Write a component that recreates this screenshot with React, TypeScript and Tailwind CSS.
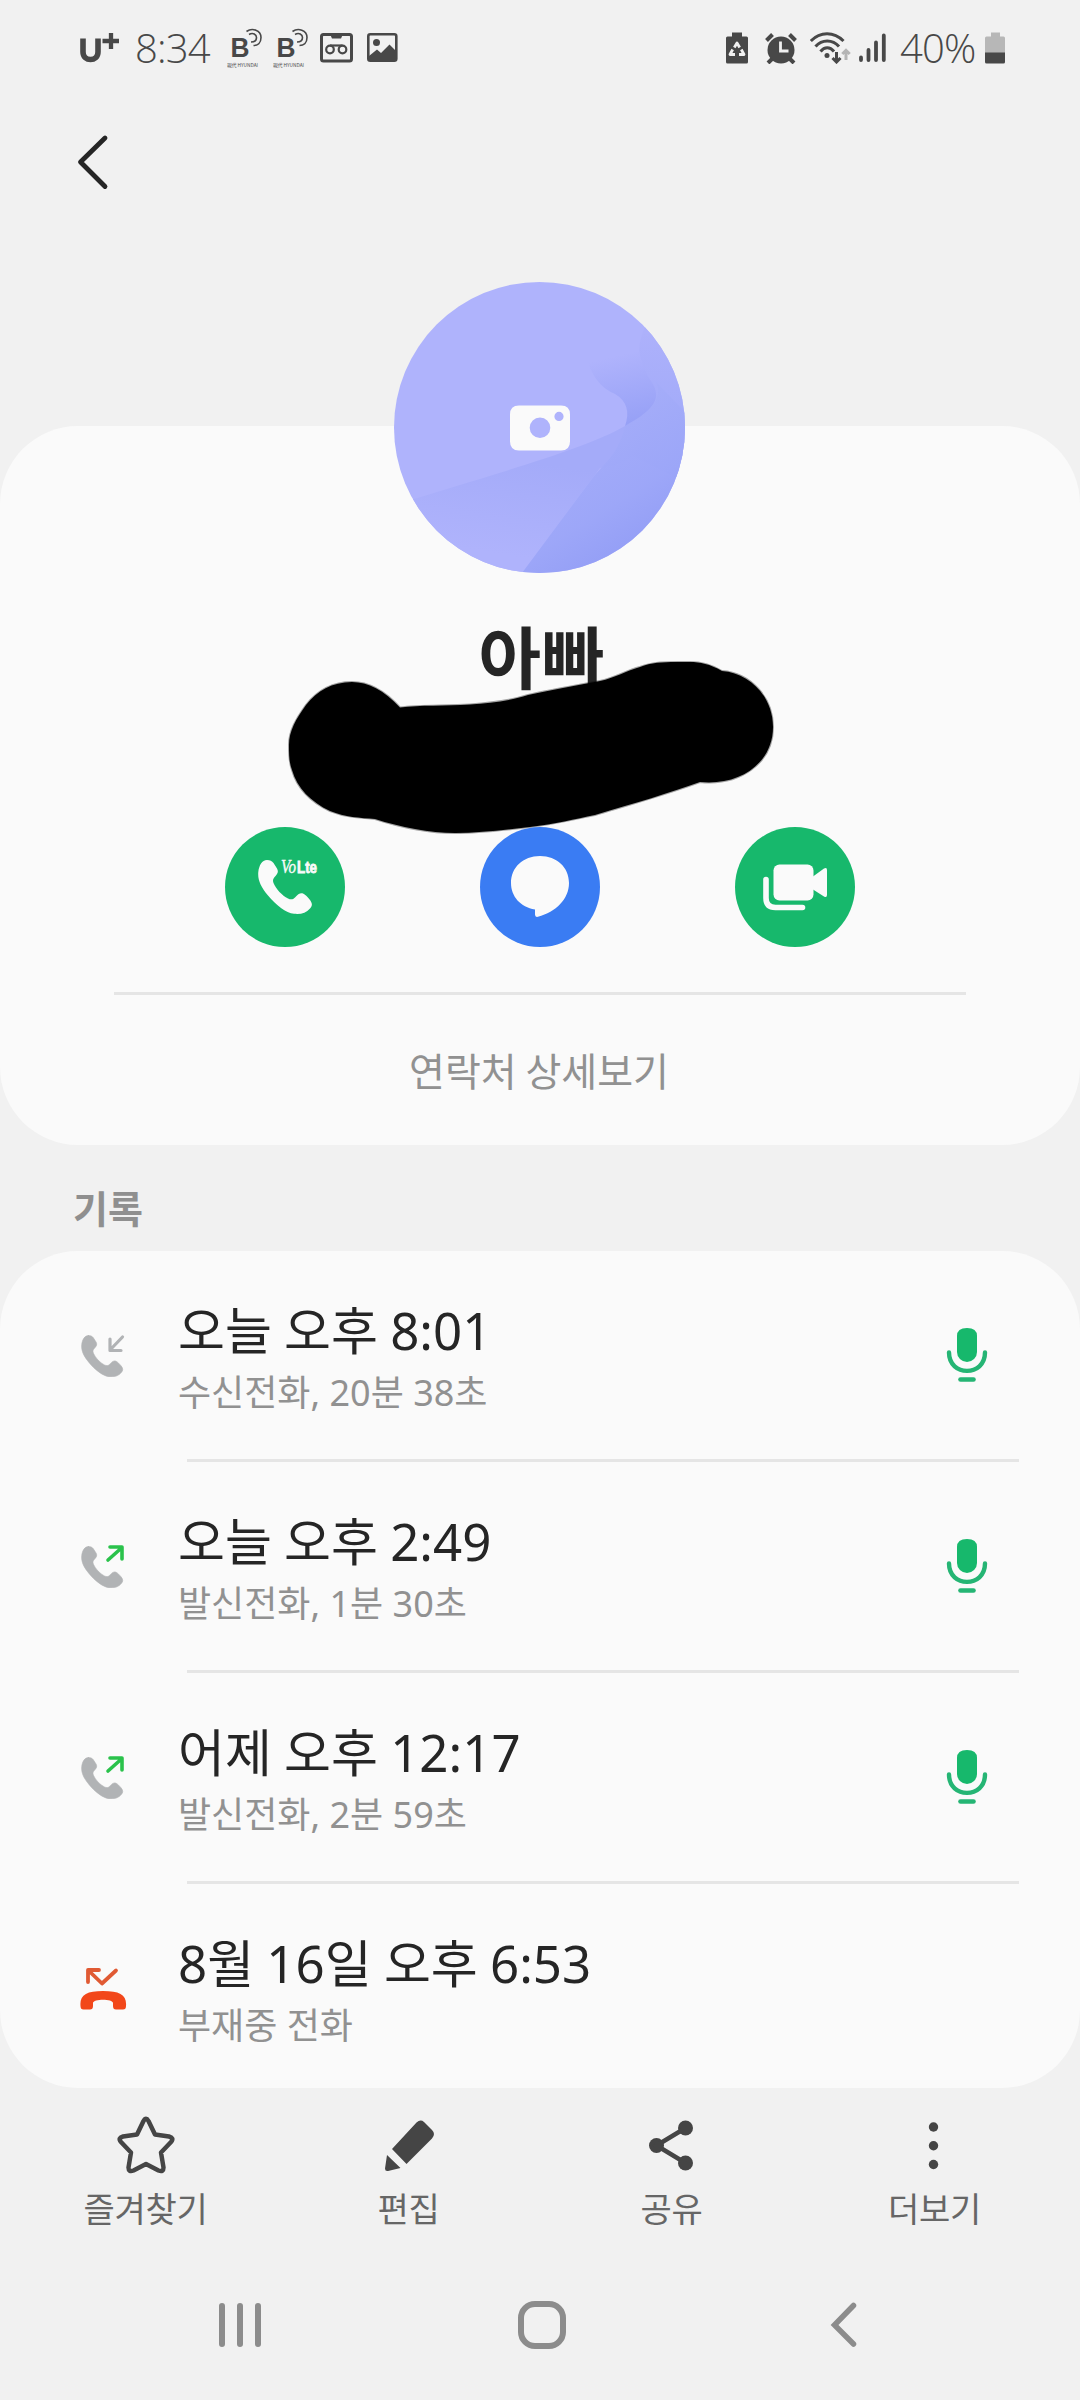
import type { ReactNode } from "react";

type CallKind = "incoming" | "outgoing" | "missed";

const calls: { kind: CallKind; when: string; detail: string; recorded: boolean }[] = [
  { kind: "incoming", when: "오늘 오후 8:01", detail: "수신전화, 20분 38초", recorded: true },
  { kind: "outgoing", when: "오늘 오후 2:49", detail: "발신전화, 1분 30초", recorded: true },
  { kind: "outgoing", when: "어제 오후 12:17", detail: "발신전화, 2분 59초", recorded: true },
  { kind: "missed", when: "8월 16일 오후 6:53", detail: "부재중 전화", recorded: false },
];

const HANDSET =
  "M9 0C12 0 14 1 15.500 3L19 8.500C20.500 11 20 13.500 17.500 16C15 18.500 14.500 20.500 15.500 23C18 29 24 35.500 30 38.500C33 40 35 39.500 37 37.500C40 34 42.500 32.500 45 33.500C47 34.300 50 37.500 52 40C54.500 43.500 54.500 45.500 52 48.500C48 53 43 54.500 36 53.800C28 53 18 45 10 35.500C3 27 -0.500 20 0.300 12C1 5.500 4 0 9 0Z";

function HyundaiIcon() {
  return (
    <svg width="36" height="40" viewBox="0 0 36 40" fill="none" stroke="#484848">
      <text x="3.500" y="29" fontSize="27" fontWeight="700" fontFamily="Liberation Sans, sans-serif" fill="#484848" stroke="none" textLength="19" lengthAdjust="spacingAndGlyphs">
        B
      </text>
      <path d="M19.500 3.500C25-0.500 34 2 34 9.500C34 15 30.500 17.500 26.500 17.500" strokeWidth="1.600" />
      <path d="M22 6.500C26 4 29.500 6.500 29.500 9.500C29.500 12.500 27.500 14 24 14" strokeWidth="1.600" />
      <text x="0" y="38.500" fontSize="5" fontFamily="Noto Sans CJK KR, sans-serif" fill="#484848" stroke="none" textLength="31" lengthAdjust="spacingAndGlyphs">
        現代 HYUNDAI
      </text>
    </svg>
  );
}

function StatusBar() {
  return (
    <header className="flex h-24 items-center justify-between pl-[80px] pr-[75px] text-[#484848]">
      <div className="flex items-center">
        <svg width="40" height="34" viewBox="0 0 40 34" fill="none" stroke="#484848">
          <path d="M3 7.500V21C3 31 18 31 18 21V7.500" strokeWidth="5.600" />
          <path d="M22.500 10H39M31 2V18" strokeWidth="4.300" />
        </svg>
        <span className="ml-[15px] w-[77px] whitespace-nowrap font-['Open_Sans','Noto_Sans',sans-serif] text-[40px] font-[360] leading-none tracking-[-0.8px]">8:34</span>
        <div className="ml-[15px] flex items-center gap-[10px]">
          <HyundaiIcon />
          <HyundaiIcon />
        </div>
        <svg className="ml-[11px]" width="33" height="30" viewBox="0 0 33 30" fill="none" stroke="#484848">
          <rect x="1.500" y="1.500" width="30" height="26.500" rx="2" strokeWidth="3" />
          <path d="M10 1h13l-2 4.500h-9z" fill="#484848" stroke="none" />
          <circle cx="10" cy="16.500" r="3.800" strokeWidth="2.200" />
          <circle cx="22.500" cy="16.500" r="3.800" strokeWidth="2.200" />
          <path d="M10 12.500h12.500" strokeWidth="2.200" />
        </svg>
        <svg className="ml-[14px]" width="31" height="30" viewBox="0 0 31 30">
          <rect x="1.300" y="1.300" width="28" height="26.500" rx="2" fill="none" stroke="#484848" strokeWidth="2.600" />
          <circle cx="9.500" cy="9.500" r="3.500" fill="#484848" />
          <path d="M2 23L10 16.500L14 20L22.500 11.500L29 18V28H2Z" fill="#484848" />
        </svg>
      </div>

      <div className="flex items-center">
        <svg width="22" height="32" viewBox="0 0 22 32">
          <path d="M6 0.500h10v4h4.500q1.500 0 1.500 1.500v24q0 1.500-1.500 1.500h-19q-1.500 0-1.500-1.500V6q0-1.500 1.500-1.500H6z" fill="#484848" />
          <path d="M8.300 15.500L11 11L13.700 15.500M15.300 17.500L18 22.500H13M9 22.500H4L6.700 17.500" fill="none" stroke="#f1f1f1" strokeWidth="2.800" strokeLinejoin="round" />
        </svg>
        <svg className="ml-[17px]" width="32" height="32" viewBox="0 0 32 32">
          <circle cx="16" cy="18" r="13.500" fill="#484848" />
          <path d="M1.500 8.500L7.500 2.500M30.500 8.500L24.500 2.500M7 27L3 31M25 27L29 31" stroke="#484848" strokeWidth="4" />
          <path d="M15.500 9.500V19H23.500" fill="none" stroke="#f1f1f1" strokeWidth="2.800" />
        </svg>
        <svg className="ml-[13px]" width="42" height="32" viewBox="0 0 42 32" fill="none" stroke="#484848" strokeWidth="3">
          <path d="M0.800 9C10-0.800 24-0.800 33.500 9" />
          <path d="M5.500 14.500C12 7 22.500 7 29 14.500" />
          <path d="M10.500 19.500C14.500 14.500 20 14.500 24 19.500" />
          <circle cx="17" cy="23.500" r="2.500" fill="#484848" stroke="none" />
          <path d="M26.500 20V29.500M22.500 26L26.500 30L30.500 26" />
          <path d="M36 28V19M32.300 22L36 18.300L39.700 22" stroke="#b4b4b4" />
        </svg>
        <svg className="ml-[7px]" width="27" height="30" viewBox="0 0 27 30" stroke="#484848" strokeWidth="3.800" strokeLinecap="round">
          <path d="M2 24.500V27M9.500 17V27M17 9.500V27M24.800 2.500V27" />
        </svg>
        <span className="ml-[14px] w-[84px] whitespace-nowrap font-['Open_Sans','Noto_Sans',sans-serif] text-[40px] font-[360] leading-none tracking-[-0.8px]">40%</span>
        <svg className="ml-[1px]" width="20" height="32" viewBox="0 0 20 32">
          <path d="M6 0.500h9v4h3.500q1.500 0 1.500 1.500V21H0V6q0-1.500 1.500-1.500H6z" fill="#b7b7b7" />
          <path d="M0 20.500H20V30q0 1.500-1.500 1.500h-17q-1.500 0-1.500-1.500z" fill="#484848" />
        </svg>
      </div>
    </header>
  );
}

function Avatar() {
  return (
    <svg className="ml-[394px] -mt-[144px] shrink-0" width="291" height="291" viewBox="0 0 291 291">
      <defs>
        <clipPath id="disc">
          <circle cx="145.500" cy="145.500" r="145.500" />
        </clipPath>
        <linearGradient id="slope" gradientUnits="userSpaceOnUse" x1="140" y1="180" x2="125" y2="275">
          <stop offset="0" stopColor="#a4abf9" />
          <stop offset="1" stopColor="#afb3fc" />
        </linearGradient>
        <linearGradient id="dune" gradientUnits="userSpaceOnUse" x1="175" y1="150" x2="250" y2="270">
          <stop offset="0" stopColor="#a5adf9" />
          <stop offset="0.600" stopColor="#9ca6f8" />
          <stop offset="1" stopColor="#919cf5" />
        </linearGradient>
        <linearGradient id="ridge" gradientUnits="userSpaceOnUse" x1="262" y1="50" x2="262" y2="150">
          <stop offset="0" stopColor="#adb1fb" />
          <stop offset="1" stopColor="#a1aaf9" />
        </linearGradient>
        <linearGradient id="shade" gradientUnits="userSpaceOnUse" x1="222" y1="74" x2="238" y2="143">
          <stop offset="0" stopColor="#afb3fc" />
          <stop offset="1" stopColor="#96a0f6" />
        </linearGradient>
      </defs>
      <g clipPath="url(#disc)">
        <rect width="291" height="291" fill="#afb3fc" />
        <path d="M251 45C240 68 247 86 255 97C268 114 262 126 231 144L231 170L291 200V40Z" fill="url(#ridge)" />
        <path d="M0 223C90 195 190 168 231 144C250 160 250 180 206 186L128 291H0Z" fill="url(#slope)" />
        <path d="M128 291L200 194C212 180 224 172 231 144C262 126 268 114 262 100L291 130V291Z" fill="url(#dune)" opacity="0.950" />
        <path d="M192 76C200 98 208 106 221 112C233 119 236 130 231 144C262 127 268 115 257 99C252 92 247 80 245 68Z" fill="url(#shade)" />
      </g>
      <path
        fillRule="evenodd"
        fill="#fafafa"
        d="M125 123.500H167Q176 123.500 176 132.500V159.500Q176 168.500 167 168.500H125Q116 168.500 116 159.500V132.500Q116 123.500 125 123.500ZM146 135.500A10.300 10.300 0 1 0 146 156.100A10.300 10.300 0 1 0 146 135.500ZM165 129.800A4.600 4.600 0 1 0 165 139A4.600 4.600 0 1 0 165 129.800Z"
      />
    </svg>
  );
}

function ActionButton({ color, children }: { color: string; children: ReactNode }) {
  return (
    <button className={`relative flex size-[120px] items-center justify-center rounded-full ${color}`}>
      {children}
    </button>
  );
}

function ContactCard() {
  return (
    <section className="relative flex h-[719px] flex-col rounded-[78px] bg-[#fafafa]">
      <Avatar />
      <h1 className="mt-[37px] h-[90px] pl-[4px] text-center text-[68px] font-bold leading-[90px] tracking-[1px] text-[#252525]">아빠</h1>

      {/* Marker stroke over the phone number */}
      <svg className="absolute left-[280px] top-[226px]" width="500" height="190" viewBox="280 652 500 190">
        <path
          d="M400 707.500C384 690 368 682 352 682C332 682 317 691 306 705C296 719 289 731 289 745C289 755 289 762 292 770C297 788 311 802 330 811C345 817 360 818 375 819C400 827 430 833 455 833C480 833 505 830 530 827C555 824 575 819 595 815C635 803 670 793 700 782C740 786 773 763 773 727C773 697 750 673 722 671C710 664 700 662 690 662C670 662 655 661 640 667C625 671 615 678 600 681C575 686 550 690 528 695C510 701 490 703 470 704.500C445 706 420 705 400 707.500Z"
          fill="#000"
          stroke="#000"
          strokeOpacity="0.350"
          strokeWidth="2"
        />
      </svg>

      <div className="mt-[127px] flex justify-center gap-[135px]">
        <ActionButton color="bg-[#17b86c]">
          <svg width="54" height="54" viewBox="0 0 54 54" fill="#fafafa">
            <path d={HANDSET} />
          </svg>
          <svg className="absolute left-[56px] top-[31px]" width="40" height="20" viewBox="0 0 40 20" fill="#fafafa">
            <text x="0" y="15" fontSize="18" fontStyle="italic" fontFamily="Liberation Serif, serif" stroke="#fafafa" strokeWidth="0.400" textLength="15" lengthAdjust="spacingAndGlyphs">
              Vo
            </text>
            <text x="16" y="15" fontSize="16" fontWeight="700" fontFamily="Liberation Sans, sans-serif" stroke="#fafafa" strokeWidth="0.800" textLength="20" lengthAdjust="spacingAndGlyphs">
              Lte
            </text>
          </svg>
        </ActionButton>
        <ActionButton color="bg-[#3a7cf3]">
          <svg width="58" height="62" viewBox="0 0 58 62" fill="#fafafa">
            <path d="M29 0C46 0 58 11.500 58 27C58 43 45 56 27 60.800Q24 61.600 24 58.500V53.500C9.500 51 0 40.500 0 27C0 11.500 12 0 29 0Z" />
          </svg>
        </ActionButton>
        <ActionButton color="bg-[#17b86c]">
          <svg width="64" height="47" viewBox="0 0 64 47" fill="#fafafa">
            <rect x="10.500" y="0.500" width="40" height="36" rx="6" />
            <path d="M50 12.500L61 4.500Q64 3 64 6V31Q64 34 61 32.500L50 25.500Z" />
            <path d="M3 15.500V34Q3 43.500 12.500 43.500H39.500" fill="none" stroke="#fafafa" strokeWidth="5.600" strokeLinecap="round" />
          </svg>
        </ActionButton>
      </div>

      <div className="mx-[114px] mt-[45px] h-[3px] bg-[#e5e5e5]" />
      <p className="mt-[44px] pr-[2px] text-center text-[39px] leading-[60px] text-[#919191]">연락처 상세보기</p>
    </section>
  );
}

function CallIcon({ kind }: { kind: CallKind }) {
  if (kind === "missed") {
    return (
      <svg width="48" height="44" viewBox="0 0 48 44">
        <path d="M8 16V4H19M8.500 4.500L22 17.500L36 4.500" fill="none" stroke="#e05a33" strokeWidth="3.800" strokeLinecap="round" strokeLinejoin="round" />
        <path d="M0.500 40C-0.500 29 6.500 25 23 25C40 25 47 29 46 40Q46 43.500 43 43.500H36Q33 43.500 33 40V37C33 32.500 13 32.500 13 37V40Q13 43.500 10 43.500H3.500Q0.500 43.500 0.500 40Z" fill="#f2471a" />
      </svg>
    );
  }
  return (
    <svg width="48" height="44" viewBox="0 0 48 44" fill="none" strokeWidth="3.200" strokeLinecap="round" strokeLinejoin="round">
      <path d={HANDSET} transform="translate(1.500 2.500) scale(0.765)" fill="#b1b3b5" stroke="#b1b3b5" strokeWidth="0.800" />
      {kind === "incoming" ? (
        <path d="M42.500 4L30 17M30 6V17.500H41" stroke="#b1b3b5" />
      ) : (
        <path d="M28 16L42 3.500M30 3H42V15" stroke="#2ac24b" strokeWidth="3.600" />
      )}
    </svg>
  );
}

function MicIcon() {
  return (
    <svg width="42" height="56" viewBox="0 0 42 56">
      <path d="M11 9Q11 1 21 1Q31 1 31 9V25A10 10 0 0 1 11 25Z" fill="#17b86c" />
      <path d="M3 25.500C3 50 39 50 39 25.500" fill="none" stroke="#25b574" strokeWidth="4.400" strokeLinecap="round" />
      <path d="M14.500 52.500H27.500" stroke="#25b574" strokeWidth="4.600" strokeLinecap="round" />
    </svg>
  );
}

function CallLog() {
  return (
    <section className="h-[837px] rounded-[78px] bg-[#fafafa]">
      {calls.map((call, i) => (
        <article key={call.when}>
          <div className="flex h-[208px] items-center pl-[80px] pr-[92px]">
            <CallIcon kind={call.kind} />
            <div className="ml-[50px] flex-1 pt-[8px] font-['Noto_Sans','Noto_Sans_CJK_KR',sans-serif]">
              <h3 className="text-[51px] leading-[64px] [word-spacing:-1px] text-[#252525]">{call.when}</h3>
              <p className="pt-[3px] text-[36px] leading-[56px] text-[#919191]">{call.detail}</p>
            </div>
            {call.recorded && <MicIcon />}
          </div>
          {i < calls.length - 1 && <div className="ml-[187px] mr-[61px] h-[3px] bg-[#e5e5e5]" />}
        </article>
      ))}
    </section>
  );
}

const tools = [
  {
    label: "즐겨찾기",
    icon: (
      <path d="M27.500 5Q30 0.500 32.500 5L39 18.500L53 20.500Q58.500 22 55 26L45 36.500L47.500 51.500Q47.500 56.500 42.500 54.500L30 48L17.500 54.500Q12.500 56.500 12.500 51.500L15 36.500L5 26Q1.500 22 7 20.500L21 18.500Z" fill="none" stroke="#454545" strokeWidth="4.500" strokeLinejoin="round" />
    ),
  },
  {
    label: "편집",
    icon: (
      <path d="M13 33L37.500 6.500Q41.500 3 45 6L53 14Q57 18 53 22.500L27.500 48ZM8 39L21.500 52L9 55Q6 55.500 6 52.500Z" fill="#454545" />
    ),
  },
  {
    label: "공유",
    icon: (
      <g fill="#454545">
        <circle cx="14.500" cy="29.500" r="7.500" />
        <circle cx="43.500" cy="12" r="7.500" />
        <circle cx="43.500" cy="47" r="7.500" />
        <path d="M43.500 12L14.500 29.500L43.500 47" fill="none" stroke="#454545" strokeWidth="4.500" />
      </g>
    ),
  },
  {
    label: "더보기",
    icon: (
      <g fill="#454545">
        <circle cx="28.500" cy="11" r="4.700" />
        <circle cx="28.500" cy="29.800" r="4.700" />
        <circle cx="28.500" cy="48.500" r="4.700" />
      </g>
    ),
  },
];

export default function App() {
  return (
    <main className="flex h-[2400px] w-[1080px] flex-col overflow-hidden bg-[#f1f1f1] font-['Noto_Sans_CJK_KR',sans-serif]">
      <StatusBar />

      <div className="h-[330px] pl-[75px] pt-[36px]">
        <svg width="34" height="60" viewBox="0 0 34 60" fill="none" stroke="#252525" strokeWidth="4.800" strokeLinecap="round" strokeLinejoin="round">
          <path d="M30 6L5.500 30L30 54.500" />
        </svg>
      </div>

      <ContactCard />
      <h2 className="h-[106px] pl-[73px] pt-[32px] text-[38px] font-bold leading-[60px] text-[#8f8f8f]">기록</h2>
      <CallLog />

      <nav className="grid grid-cols-4 px-[14px] pt-[28px]">
        {tools.map((tool) => (
          <button key={tool.label} className="flex flex-col items-center">
            <svg width="60" height="60" viewBox="0 0 60 60">
              {tool.icon}
            </svg>
            <span className="mt-[7px] text-[34px] leading-[50px] tracking-[-0.3px] text-[#666]">{tool.label}</span>
          </button>
        ))}
      </nav>

      {/* System navigation */}
      <div className="flex items-center pl-[216px] pt-[64px]">
        <svg width="48" height="56" viewBox="0 0 48 56" stroke="#8c8c8c" strokeWidth="6" strokeLinecap="round">
          <path d="M6 9V47M24 9V47M42 9V47" />
        </svg>
        <svg className="ml-[253px]" width="50" height="56" viewBox="0 0 50 56">
          <rect x="4" y="7" width="42" height="42" rx="14" fill="none" stroke="#8c8c8c" strokeWidth="6" />
        </svg>
        <svg className="ml-[259px]" width="34" height="56" viewBox="0 0 34 56" fill="none" stroke="#8c8c8c" strokeWidth="5.500" strokeLinecap="round">
          <path d="M27.500 8.500L8.500 28L27.500 47" />
        </svg>
      </div>
    </main>
  );
}
